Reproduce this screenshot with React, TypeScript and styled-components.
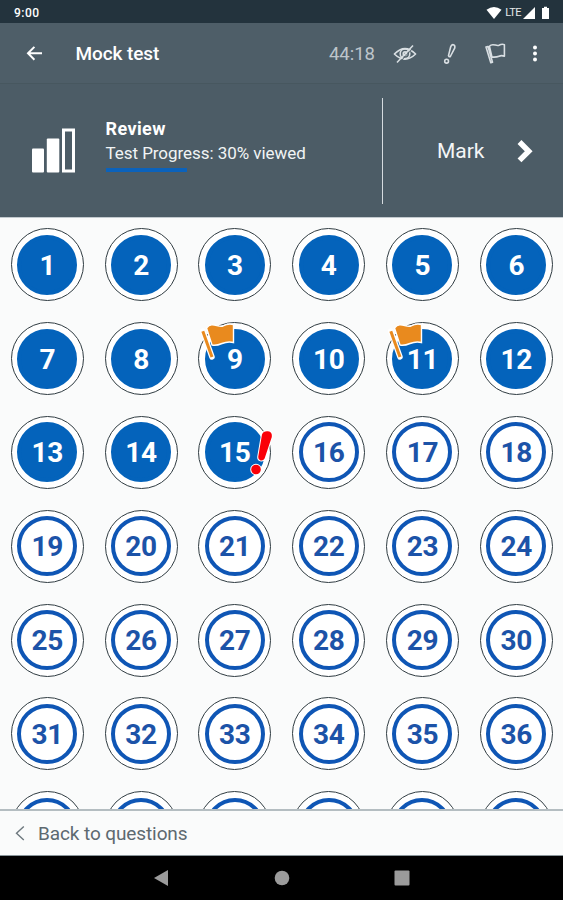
import React from 'react';
import styled, { createGlobalStyle } from 'styled-components';

const GlobalStyle = createGlobalStyle`
  * { box-sizing: border-box; }
  body { margin: 0; background: #fafbfb; font-family: Roboto, sans-serif; }
  svg { display: block; flex: none; }
`;

const Screen = styled.div`
  width: 563px;
  height: 900px;
  display: flex;
  flex-direction: column;
  overflow: hidden;
  background: #fafbfb;
`;

const StatusBar = styled.div`
  height: 23px;
  flex: none;
  display: flex;
  align-items: center;
  padding: 2px 12px 0 14px;
  background: #23333d;
  color: #fff;
`;

const Clock = styled.span`
  font-size: 12px;
  font-weight: 500;
  line-height: 14px;
  letter-spacing: 0.5px;
  flex: 1;
`;

const Network = styled.span`
  font-size: 11px;
  line-height: 14px;
  letter-spacing: -0.5px;
  color: #e4e8ea;
  margin: 0 2px 0 3px;
`;

const Toolbar = styled.header`
  height: 60px;
  flex: none;
  display: flex;
  align-items: center;
  padding: 2px 24px 0 26px;
  background: #4e5e68;
  color: #fff;
`;

const Title = styled.h1`
  flex: 1;
  margin: 0 0 0 32.5px;
  font-size: 19px;
  font-weight: 500;
  line-height: 24px;
  letter-spacing: -0.1px;
`;

const Timer = styled.span`
  font-size: 18.5px;
  line-height: 24px;
  color: #bdc5cb;
  margin-right: 17px;
`;

const Tools = styled.div`
  display: flex;
  align-items: center;
`;

const Summary = styled.section`
  height: 135px;
  flex: none;
  display: flex;
  align-items: center;
  background: #4c5c66;
  border-top: 1px solid #47575f;
  border-bottom: 1px solid #c3cacf;
  color: #fff;
`;

const SummaryInfo = styled.div`
  width: 382px;
  display: flex;
  padding: 0 0 10px 31px;

  > svg { margin-top: 11px; }
`;

const SummaryText = styled.div`
  margin-left: 29.5px;
`;

const Heading = styled.div`
  font-size: 18px;
  font-weight: 700;
  line-height: 24px;
  letter-spacing: 0.4px;
`;

const Detail = styled.div`
  font-size: 17px;
  line-height: 24px;
  letter-spacing: -0.05px;
  color: #f1f4f5;
`;

const Progress = styled.div`
  width: 81px;
  height: 4px;
  margin-top: 3px;
  background: #0b62bb;
`;

const MarkButton = styled.button`
  flex: 1;
  height: 106px;
  display: flex;
  align-items: center;
  padding: 1px 0 0 54px;
  border: 0;
  border-left: 1px solid #d5dbdf;
  background: none;
  color: #f4f6f7;
  font: 400 21px/26px Roboto, sans-serif;

  svg { margin-left: 32px; }
`;

const Questions = styled.main`
  flex: 1;
  min-height: 0;
  overflow: hidden;
  display: grid;
  grid-template-columns: repeat(6, 93.8px);
  grid-auto-rows: 93.8px;
  place-items: center;
  padding-left: 0.4px;
`;

const Ring = styled.div`
  position: relative;
  width: 73px;
  height: 73px;
  display: grid;
  place-items: center;
  border: 1px solid #303c42;
  border-radius: 50%;
  background: #fff;
`;

const Disc = styled.div<{ $viewed: boolean }>`
  width: 60px;
  height: 60px;
  display: grid;
  place-items: center;
  padding-top: 2px;
  border: 4px solid ${p => (p.$viewed ? '#0463bb' : '#0f56b5')};
  border-radius: 50%;
  background: ${p => (p.$viewed ? '#0463bb' : '#fff')};
  color: ${p => (p.$viewed ? '#fff' : '#1c53a8')};
  font-size: 28px;
  font-weight: 700;
  line-height: 32px;
  letter-spacing: -0.3px;
`;

const FlagBadge = styled.svg`
  position: absolute;
  left: 1px;
  top: 0;
`;

const AlertBadge = styled.svg`
  position: absolute;
  left: 49px;
  top: 12px;
`;

const Footer = styled.footer`
  height: 47px;
  flex: none;
  display: flex;
  align-items: center;
  gap: 13px;
  padding: 2px 0 0 15px;
  border-top: 2px solid #b4bdc1;
  border-bottom: 1px solid #89959a;
  color: #5d6970;
  font-size: 19px;
  line-height: 24px;
  letter-spacing: -0.1px;
`;

const NavigationBar = styled.nav`
  height: 44px;
  flex: none;
  display: flex;
  justify-content: center;
  align-items: center;
  gap: 104px;
  background: #000;
`;

const flagged = [9, 11];
const important = [15];
const viewedCount = 15;
const labelledCount = 36;
const numbers = Array.from({ length: 42 }, (_, i) => i + 1);

function StatusIcons() {
  return (
    <>
      <svg width="16" height="14" viewBox="0 0 16 14">
        <path d="M.5 3.7Q8-1.6 15.5 3.7L8 13Z" fill="#fff" />
      </svg>
      <Network>LTE</Network>
      <svg width="28" height="14" viewBox="0 0 28 14">
        <path d="M12 1v12H0z" fill="#fff" />
        <path d="M19 2h2V.8h3V2h2v11h-7z" fill="#fff" />
      </svg>
    </>
  );
}

const ToolIcon = styled.svg<{ $gap?: number }>`
  margin-left: ${p => p.$gap ?? 0}px;
  fill: none;
  stroke: #d9dfe3;
  stroke-linejoin: round;
`;

function ToolIcons() {
  return (
    <Tools>
      <ToolIcon width="26" height="24" viewBox="0 0 26 24" strokeWidth="1.6">
        <path d="M2.4 12Q13 1.2 23.6 12Q13 22.2 2.4 12Z" />
        <circle cx="13" cy="11.7" r="4.8" />
        <circle cx="13" cy="11.7" r="1.8" />
        <path d="M21 3.5 5 20.5" />
        <path d="M22.2 4.8 7 21" stroke="#4e5e68" strokeWidth="1" />
      </ToolIcon>
      <ToolIcon $gap={21} width="20" height="24" viewBox="0 0 20 24" strokeWidth="1.6">
        <path d="M9.5 13.6 11.7 4.8Q12.6 2.2 14.4 2.7T15.8 5.8L11.6 14Q10.6 15.8 9.5 13.6Z" />
        <circle cx="7.6" cy="19.2" r="1.9" />
      </ToolIcon>
      <ToolIcon $gap={25} width="24" height="24" viewBox="0 0 24 24" strokeWidth="1.6">
        <path d="M5.4 4.2C9 .4 12 4.7 15 3.3Q18 1.7 20.4 2.7V14.2Q17.6 13 15 14.2T7.9 15ZM2 5.1l2-.5 4.5 15.6-1.7.5Z" />
      </ToolIcon>
      <ToolIcon $gap={23} width="8" height="24" viewBox="0 0 8 24">
        <g fill="#fff" stroke="none">
          <circle cx="4" cy="5.6" r="2" />
          <circle cx="4" cy="11.5" r="2" />
          <circle cx="4" cy="17.4" r="2" />
        </g>
      </ToolIcon>
    </Tools>
  );
}

function Question({ number }: { number: number }) {
  return (
    <Ring>
      <Disc $viewed={number <= viewedCount}>{number <= labelledCount && number}</Disc>
      {flagged.includes(number) && (
        <FlagBadge width="36" height="38" viewBox="0 0 36 38">
          <path d="M6.5 5C12-2 18 5 23 3Q28 0 33.5 1.5V19.5Q28 18 22 20.5T12 22Z" fill="#e98a1e" stroke="#fff" strokeWidth="1.4" />
          <path d="M2.8 8.2 12 34" stroke="#fff" strokeWidth="5.5" strokeLinecap="round" />
          <path d="M2.8 8.2 12 34" stroke="#e98a1e" strokeWidth="3" />
        </FlagBadge>
      )}
      {important.includes(number) && (
        <AlertBadge width="26" height="48" viewBox="0 0 26 48">
          <g fill="#fa0008" stroke="#fff" strokeWidth="2" strokeLinejoin="round" paintOrder="stroke">
            <path d="M14 5.5Q15.5 1.8 20 2.3T23.8 8L16.6 29.5Q15 32.2 12.5 31.4T10.2 28Z" />
            <circle cx="8" cy="40.5" r="4.8" />
          </g>
        </AlertBadge>
      )}
    </Ring>
  );
}

export default function App() {
  return (
    <Screen>
      <GlobalStyle />
      <StatusBar>
        <Clock>9:00</Clock>
        <StatusIcons />
      </StatusBar>
      <Toolbar>
        <svg width="17" height="16" viewBox="0 0 17 16" fill="none" stroke="#fff" strokeWidth="2">
          <path d="M16 7.3H2M8.4.9 2 7.3l6.4 6.4" />
        </svg>
        <Title>Mock test</Title>
        <Timer>44:18</Timer>
        <ToolIcons />
      </Toolbar>
      <Summary>
        <SummaryInfo>
          <svg width="45" height="46" viewBox="0 0 45 46" fill="#fff">
            <rect x="1" y="20.5" width="12" height="24" rx="1" />
            <rect x="15.8" y="10.5" width="12.5" height="34" rx="1" />
            <rect x="32.5" y="2" width="10" height="41" fill="none" stroke="#fff" strokeWidth="3" />
          </svg>
          <SummaryText>
            <Heading>Review</Heading>
            <Detail>Test Progress: 30% viewed</Detail>
            <Progress />
          </SummaryText>
        </SummaryInfo>
        <MarkButton>
          Mark
          <svg width="18" height="25" viewBox="0 0 18 25" fill="none" stroke="#fff" strokeWidth="5.5">
            <path d="m2.5 3 9.2 9.2L2.5 21.4" />
          </svg>
        </MarkButton>
      </Summary>
      <Questions>
        {numbers.map(n => <Question key={n} number={n} />)}
      </Questions>
      <Footer>
        <svg width="10" height="16" viewBox="0 0 10 16" fill="none" stroke="#6d787e" strokeWidth="1.4">
          <path d="M8.8.5 1.5 7.3l7.3 6.8" />
        </svg>
        Back to questions
      </Footer>
      <NavigationBar>
        <svg width="16" height="16" viewBox="0 0 16 16" fill="#9b9b9b"><path d="M14 0v16L0 8z" /></svg>
        <svg width="16" height="16" viewBox="0 0 16 16" fill="#9b9b9b"><circle cx="8" cy="8" r="7.3" /></svg>
        <svg width="16" height="16" viewBox="0 0 16 16" fill="#9b9b9b"><rect x=".5" y=".5" width="15" height="15" rx="1" /></svg>
      </NavigationBar>
    </Screen>
  );
}
